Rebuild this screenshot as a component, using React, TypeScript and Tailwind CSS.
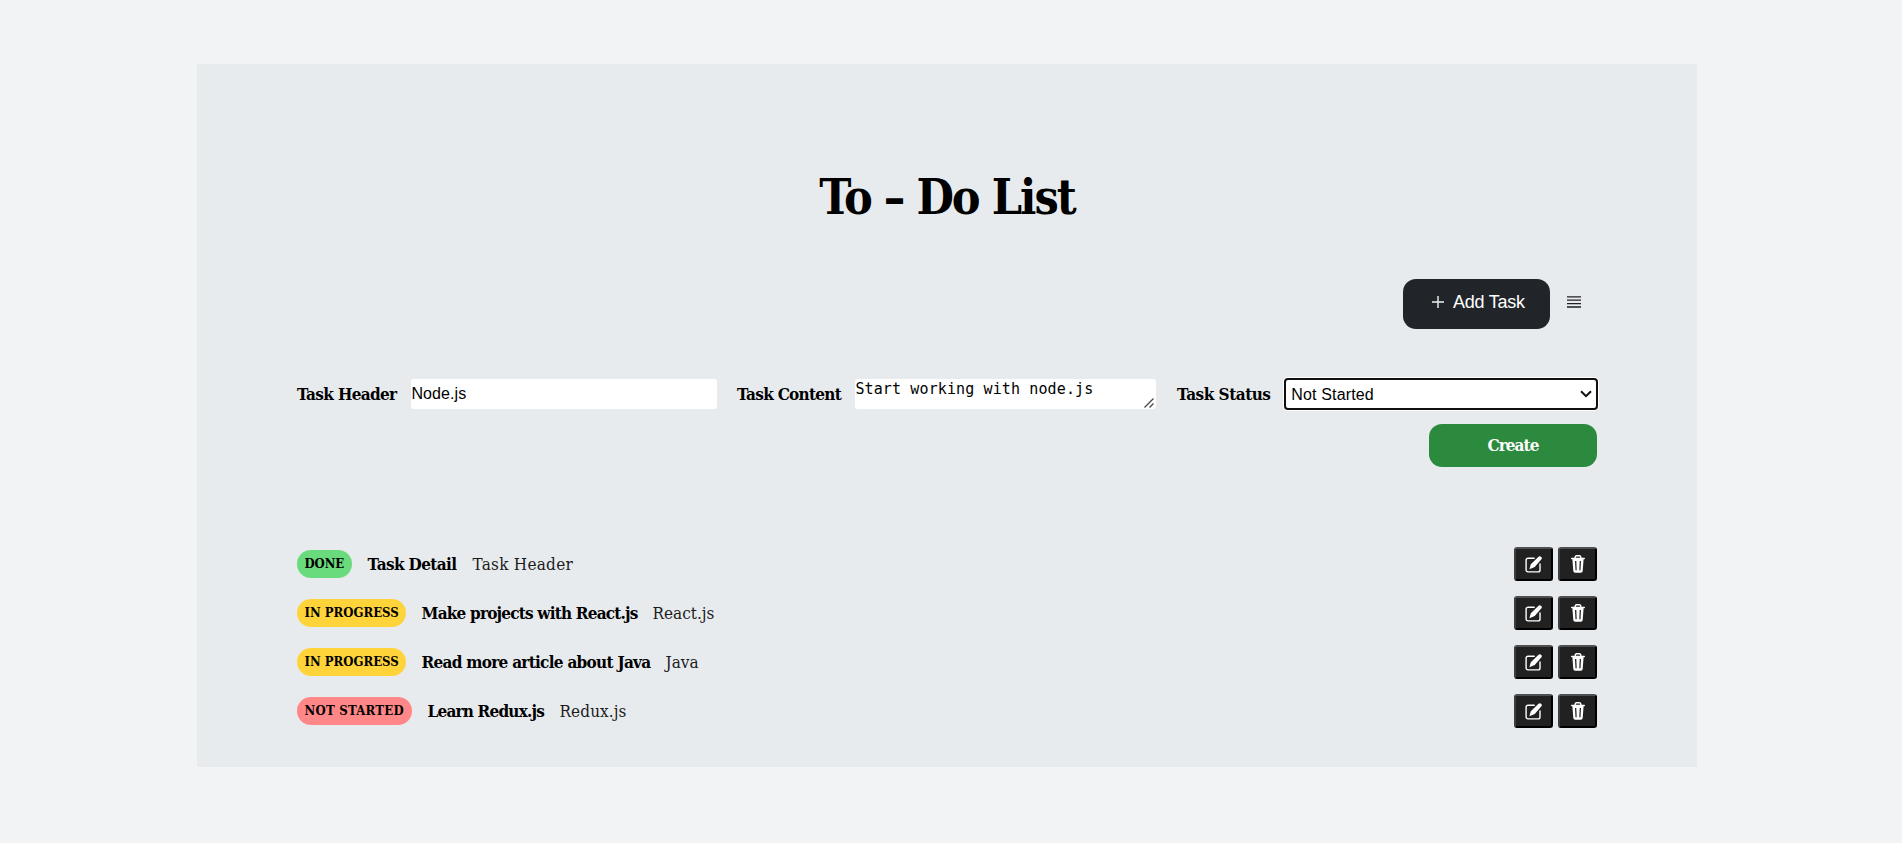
import React from "react";

type Task = {
  status: string;
  badge: string;
  title: string;
  titleStyle: string;
  detail: string;
  detailStyle: string;
};

const tasks: Task[] = [
  {
    status: "DONE",
    badge: "w-[55px] bg-[#69db7c] tracking-[-0.1px]",
    title: "Task Detail",
    titleStyle: "w-[90px] tracking-[-0.62px]",
    detail: "Task Header",
    detailStyle: "tracking-[0.27px]",
  },
  {
    status: "IN PROGRESS",
    badge: "w-[109px] bg-[#ffd43b] tracking-[0px]",
    title: "Make projects with React.js",
    titleStyle: "w-[216px] tracking-[-0.8px]",
    detail: "React.js",
    detailStyle: "tracking-[0px]",
  },
  {
    status: "IN PROGRESS",
    badge: "w-[109px] bg-[#ffd43b] tracking-[0px]",
    title: "Read more article about Java",
    titleStyle: "w-[229px] tracking-[-0.72px]",
    detail: "Java",
    detailStyle: "tracking-[0px]",
  },
  {
    status: "NOT STARTED",
    badge: "w-[115px] bg-[#ff8787] tracking-[0.27px]",
    title: "Learn Redux.js",
    titleStyle: "w-[117px] tracking-[-0.8px]",
    detail: "Redux.js",
    detailStyle: "tracking-[0.1px]",
  },
];

const label = "whitespace-nowrap text-[17px] font-bold leading-6";

function PlusIcon() {
  return (
    <svg width="12" height="12" viewBox="0 0 12 12" stroke="#f1f1f1" strokeWidth="1.4" fill="none">
      <path d="M6 0v12M0 6h12" />
    </svg>
  );
}

function ListIcon() {
  return (
    <svg width="14" height="12" viewBox="0 0 14 12" stroke="#1e2023" strokeWidth="1.3">
      <path d="M0 .8h14M0 4.2h14M0 7.6h14M0 11h14" />
    </svg>
  );
}

function EditIcon() {
  return (
    <svg width="17" height="17" viewBox="0 0 17 17" fill="none">
      <path
        d="M9.2 2.2H3A1.9 1.9 0 0 0 1.1 4.1V14A1.9 1.9 0 0 0 3 15.9h10.1A1.9 1.9 0 0 0 15 14V8"
        stroke="#fff"
        strokeWidth="1.4"
        strokeLinecap="round"
      />
      <path d="M13.3 .9a1.9 1.9 0 0 1 2.9 2.7L9.7 11 4.4 13.2 5.8 8.3z" fill="#fff" />
    </svg>
  );
}

function TrashIcon() {
  return (
    <svg width="14" height="18" viewBox="0 0 14 18" fill="none">
      <path d="M4.2 3V2.1A1.3 1.3 0 0 1 5.5.8h3a1.3 1.3 0 0 1 1.3 1.3V3" stroke="#fff" strokeWidth="1.4" />
      <path
        fillRule="evenodd"
        d="M.7 2.8h12.6a.6.6 0 0 1 0 1.4h-.7l-.9 11.9A1.9 1.9 0 0 1 9.8 17.8H4.2a1.9 1.9 0 0 1-1.9-1.7L1.4 4.2H.7a.6.6 0 0 1 0-1.4zM4 6l.5 9.3h1.2L5.3 6zM8.7 6l-.4 9.3h1.2L10 6z"
        fill="#fff"
      />
    </svg>
  );
}

function IconButton({ name, children }: { name: string; children: React.ReactNode }) {
  return (
    <button
      aria-label={name}
      className="flex h-[34px] w-[39px] items-center justify-center rounded-[3px] border-2 border-t-[#4d4f51] border-r-black border-b-black border-l-[#3c3e40] bg-[#212121]"
    >
      {children}
    </button>
  );
}

export default function App() {
  return (
    <div className="flex h-[843px] justify-center overflow-hidden bg-[#f1f3f5] pr-2 pt-16 font-['DejaVu_Serif_Condensed','DejaVu_Serif',serif] text-black">
      <main className="flex h-[703px] w-[1500px] flex-col bg-[#e8ebee] px-[100px]">
        <h1 className="mt-[101px] text-center text-5xl font-bold leading-[64px] tracking-[-2px]">To – Do List</h1>

        <div className="mt-[50px] flex h-[50px] justify-end">
          <button className="flex h-[50px] w-[147px] items-center gap-[9px] rounded-[13px] bg-[#212529] pb-[4px] pl-[29px] font-['Liberation_Sans',sans-serif] text-lg text-white">
            <PlusIcon />
            <span className="whitespace-nowrap tracking-[-0.25px]">Add Task</span>
          </button>
          <div className="ml-[17px] mr-4 mt-[17px]">
            <ListIcon />
          </div>
        </div>

        <form className="mt-[49px] flex h-8 items-center">
          <label className={`${label} w-[114px] tracking-[-0.66px]`}>Task Header</label>
          <input
            defaultValue="Node.js"
            className="h-[30px] w-[306px] rounded-[3px] bg-white pl-[0.5px] font-['Liberation_Sans',sans-serif] text-base tracking-[0.1px] outline-none"
          />
          <label className={`${label} ml-[20.5px] w-[118.5px] tracking-[-0.72px]`}>Task Content</label>
          <div className="relative h-[30px] w-[301px]">
            <textarea
              defaultValue="Start working with node.js"
              className="block h-[30px] w-[301px] resize-none overflow-hidden rounded-[3px] bg-white pt-px font-['DejaVu_Sans_Mono',monospace] text-[15px] leading-[19px] tracking-[0.12px] outline-none"
            />
            <svg className="absolute right-[2px] bottom-[1px]" width="10" height="10" viewBox="0 0 10 10" stroke="#444" strokeWidth="1.3">
              <path d="M.5 9.5l9-9M5.5 9.5l4-4" />
            </svg>
          </div>
          <label className={`${label} ml-[20.5px] w-[107.5px] tracking-[-0.5px]`}>Task Status</label>
          <div className="-mr-px flex h-8 w-[314px] items-center justify-between rounded-[4px] border-2 border-[#101010] bg-white pl-[5px] pr-[4px] font-['Liberation_Sans',sans-serif] text-base tracking-[0.15px] ring-1 ring-white">
            <span className="pt-px">Not Started</span>
            <svg width="12" height="8" viewBox="0 0 12 8" fill="none" stroke="#101010" strokeWidth="2">
              <path d="M1 1.2l5 5 5-5" />
            </svg>
          </div>
        </form>

        <button className="mt-[14px] flex h-[43px] w-[168px] items-center justify-center self-end rounded-[13px] bg-[#2b8a3e] text-[17px] font-bold tracking-[-0.95px] text-white">
          Create
        </button>

        <ul className="mt-20 flex flex-col gap-[15px]">
          {tasks.map((task) => (
            <li key={task.title} className="flex h-[34px] items-center">
              <span
                className={`${task.badge} flex h-7 items-center whitespace-nowrap rounded-full pl-[7.5px] text-[13px] font-bold`}
              >
                {task.status}
              </span>
              <span className={`${task.titleStyle} ml-[15.5px] whitespace-nowrap text-[17px] font-bold leading-6`}>
                {task.title}
              </span>
              <span className={`${task.detailStyle} ml-[15px] whitespace-nowrap text-[17px] leading-6 text-[#1c1c1c]`}>
                {task.detail}
              </span>
              <div className="ml-auto flex gap-[5px]">
                <IconButton name="Edit">
                  <EditIcon />
                </IconButton>
                <IconButton name="Delete">
                  <TrashIcon />
                </IconButton>
              </div>
            </li>
          ))}
        </ul>
      </main>
    </div>
  );
}
